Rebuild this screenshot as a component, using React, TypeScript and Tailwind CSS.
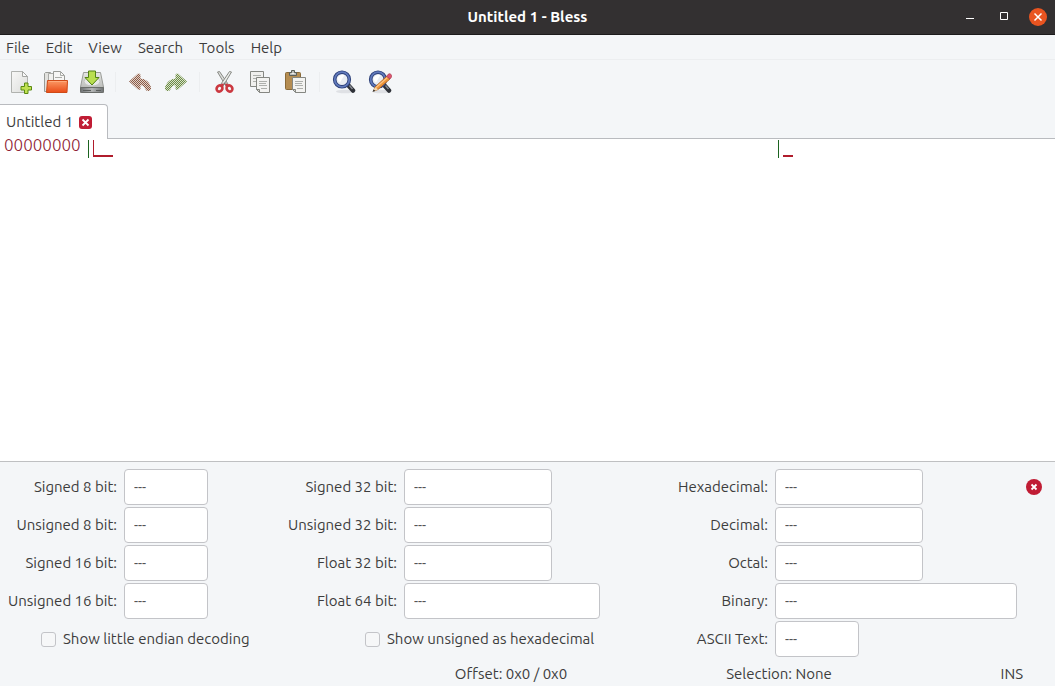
import { useState } from "react";
import type { ReactNode } from "react";

const menus = ["File", "Edit", "View", "Search", "Tools", "Help"];

function Svg({ children }: { children: ReactNode }) {
  return (
    <svg viewBox="0 0 24 24" className="size-6" aria-hidden="true">
      {children}
    </svg>
  );
}

function NewIcon() {
  return (
    <Svg>
      <path d="M3.500 1.500h11l5 5v16h-16z" fill="url(#paper)" stroke="#b0b2af" />
      <path d="M14.500 1.500v5h5z" fill="#fafafa" stroke="#a3a5a2" strokeLinejoin="round" />
      <path d="M16.500 13h3.500v3.500h3.500v3.500h-3.500v3.500h-3.500v-3.500h-3.500v-3.500h3.500z" fill="#c0e052" stroke="#5a8a12" strokeLinejoin="round" />
    </Svg>
  );
}

function OpenIcon() {
  return (
    <Svg>
      <path d="M.500 21.500V3.500l1-1h5l1.500 2v17z" fill="#e2e2df" stroke="#999b97" />
      <path d="M4.500 21V3.500h7V21z" fill="#f1f1ef" stroke="#a9aaa7" />
      <path d="M9.500 18V1.500h7l4 4V18z" fill="#f6f6f5" stroke="#999b97" />
      <path d="M16.500 1.500v4h4M11 7.500h7" fill="none" stroke="#aaaca8" />
      <path d="M3.500 10.500h20l-.5 12H2.500z" fill="url(#folder)" stroke="#cf4a16" strokeLinejoin="round" />
      <path d="M4.500 11.500h18" stroke="#ffab7c" />
    </Svg>
  );
}

function SaveIcon() {
  return (
    <Svg>
      <path d="M3.500 2.500h17l3 14.500v5.500H.5V17z" fill="url(#metal)" stroke="#9a9c98" strokeLinejoin="round" />
      <path d="M.5 17.500h23v4q0 1-1 1h-21q-1 0-1-1z" fill="url(#drive)" stroke="#6a6d6a" />
      <path d="M3 20.500h8M16 20.500h5" stroke="#5c5f5d" />
      <ellipse cx="12" cy="11.500" rx="8" ry="4.500" fill="#e8e9e7" stroke="#c2c4c0" />
      <path d="M8.500 1h7v6.500h3.500L12 15 5 7.500h3.500z" fill="#b9de50" stroke="#528214" strokeLinejoin="round" />
    </Svg>
  );
}

function ArrowIcon({ redo }: { redo?: boolean }) {
  return (
    <Svg>
      <g transform={redo ? "translate(24 0) scale(-1 1)" : undefined}>
        <path
          d="M1 11.500 10 3.500q2.500-.5 2.500 1.500v3.500q8 .5 10.500 8.500.500 4-3 4-2 0-3-2.500-1-3-4.500-3.500v3.500q0 2-2.500 1z"
          fill={redo ? "url(#checkGreen)" : "url(#checkRed)"}
        />
      </g>
    </Svg>
  );
}

function CutIcon() {
  return (
    <Svg>
      <path d="M5.500 2 14.500 17l1.500-3L7.500 1.500z" fill="#dcdedb" stroke="#888a85" strokeLinejoin="round" />
      <path d="M19.500 2 10.500 17 9 14l8.500-12.500z" fill="#eceeeb" stroke="#888a85" strokeLinejoin="round" />
      <ellipse cx="7.500" cy="18.500" rx="2.800" ry="3.200" transform="rotate(35 7.500 18.500)" fill="none" stroke="#cb3840" strokeWidth="2.600" />
      <ellipse cx="17.500" cy="18.500" rx="2.800" ry="3.200" transform="rotate(-35 17.500 18.500)" fill="none" stroke="#cb3840" strokeWidth="2.600" />
      <path d="m9 16 2.500-2M16 16l-2.500-2" stroke="#cb3840" strokeWidth="2" />
      <circle cx="12.500" cy="13.500" r="1" fill="#777" />
    </Svg>
  );
}

function CopyIcon() {
  return (
    <Svg>
      <path d="M2.500 1.500h13v15h-13z" fill="#f0f0ee" stroke="#858782" />
      <path d="M5 5.500h8M5 8.500h8M5 11.500h3" stroke="#aeb0ac" />
      <path d="M8.500 7.500h13v15h-10l-3-3z" fill="#f3f3f1" stroke="#858782" />
      <path d="M8.500 19.500h3v3z" fill="#d5d6d2" stroke="#858782" strokeLinejoin="round" />
      <path d="M11 11.500h8M11 13.500h7M11 15.500h8M13 18.500h6" stroke="#aeb0ac" />
    </Svg>
  );
}

function PasteIcon() {
  return (
    <Svg>
      <rect x="1.500" y="2.500" width="15" height="17" rx="1" fill="#b58d52" stroke="#8a6a38" />
      <path d="M5.500 2.500h2v-2h3v2h2v3h-7z" fill="#b9bbb7" stroke="#5b5e59" />
      <path d="M7.500 3.500h3" stroke="#eee" />
      <path d="M8.500 7.500h13v15h-10l-3-3z" fill="#f3f3f1" stroke="#858782" />
      <path d="M8.500 19.500h3v3z" fill="#d5d6d2" stroke="#858782" strokeLinejoin="round" />
      <path d="M11 11.500h8M11 13.500h7M11 15.500h8M13 18.500h6" stroke="#aeb0ac" />
    </Svg>
  );
}

function FindIcon({ replace }: { replace?: boolean }) {
  return (
    <Svg>
      <ellipse cx="13" cy="21.500" rx="9" ry="1.800" fill="#dfe1e5" />
      <path d="m16.500 15.500 4.500 5" stroke="#2e3138" strokeWidth="4.500" strokeLinecap="round" />
      <path d="m17.500 15.500 3 3.500" stroke="#878b94" strokeWidth="1.500" />
      <circle cx="10" cy="9.500" r="7.300" fill="#e9edf3" stroke="#2c3f78" strokeWidth="3.600" />
      <circle cx="10" cy="9.500" r="7.300" fill="none" stroke="#6079bb" strokeWidth="1.800" />
      <path d="M5.500 8.500c1-3 4.500-4.500 7-3.500L8 12.500c-1.500-.8-2.500-2.500-2.500-4z" fill="#fff" />
      {replace && (
        <>
          <path d="M5.500 21 7 17 19 6l3 3L10 19.500z" fill="#ee9539" stroke="#a85a18" strokeWidth=".8" />
          <path d="M8 17.500 20 7" stroke="#ffc483" strokeWidth="1.200" />
          <path d="m18.500 6.500 2-2.500c1.500-1 4 1 3 3L22 9z" fill="#dc5570" stroke="#a7384c" strokeWidth=".7" />
          <path d="m7 17 3 2.500-5 2z" fill="#f4dab2" />
          <path d="m5.800 19.500 1.500 1.400-2.800.8z" fill="#222" />
        </>
      )}
    </Svg>
  );
}

const toolGroups: { name: string; icon: ReactNode }[][] = [
  [
    { name: "New", icon: <NewIcon /> },
    { name: "Open", icon: <OpenIcon /> },
    { name: "Save", icon: <SaveIcon /> },
  ],
  [
    { name: "Undo", icon: <ArrowIcon /> },
    { name: "Redo", icon: <ArrowIcon redo /> },
  ],
  [
    { name: "Cut", icon: <CutIcon /> },
    { name: "Copy", icon: <CopyIcon /> },
    { name: "Paste", icon: <PasteIcon /> },
  ],
  [
    { name: "Find", icon: <FindIcon /> },
    { name: "Find and Replace", icon: <FindIcon replace /> },
  ],
];

function SharedPaints() {
  return (
    <svg className="absolute size-0" aria-hidden="true">
      <defs>
        <linearGradient id="paper" x2="1" y2="1">
          <stop stopColor="#f8f8f7" />
          <stop offset="1" stopColor="#dcdddb" />
        </linearGradient>
        <linearGradient id="folder" x2="0" y2="1">
          <stop stopColor="#fb9a66" />
          <stop offset="1" stopColor="#ea4c17" />
        </linearGradient>
        <linearGradient id="metal" x2="0" y2="1">
          <stop stopColor="#e6e7e5" />
          <stop offset="1" stopColor="#aeb0ad" />
        </linearGradient>
        <linearGradient id="drive">
          <stop stopColor="#6f7274" />
          <stop offset=".5" stopColor="#b4b6b6" />
          <stop offset="1" stopColor="#6f7274" />
        </linearGradient>
        <pattern id="checkRed" width="2" height="2" patternUnits="userSpaceOnUse">
          <path d="M0 0h2v2H0z" fill="#e2d2c8" />
          <path d="M0 0h1v1H0zM1 1h1v1H1z" fill="#8a5a48" />
        </pattern>
        <pattern id="checkGreen" width="2" height="2" patternUnits="userSpaceOnUse">
          <path d="M0 0h2v2H0z" fill="#d8e4c8" />
          <path d="M0 0h1v1H0zM1 1h1v1H1z" fill="#6b8847" />
        </pattern>
      </defs>
    </svg>
  );
}

function Field({ label, width }: { label: string; width: string }) {
  const id = label.toLowerCase().replace(/\W+/g, "-");
  return (
    <div className="flex items-center gap-[7px]">
      <label htmlFor={id} className="w-[117px] shrink-0 text-right whitespace-nowrap">
        {label}:
      </label>
      <input
        id={id}
        type="text"
        defaultValue="---"
        className={`h-9 rounded-[4px] border border-[#c3c4c8] bg-white px-[9px] text-[14px] text-[#555] outline-none ${width}`}
      />
    </div>
  );
}

function Check({ label, indent }: { label: string; indent: string }) {
  return (
    <label className={`flex h-9 items-center gap-[7px] whitespace-nowrap ${indent}`}>
      <input
        type="checkbox"
        className="size-[15px] shrink-0 appearance-none rounded-[3px] border border-[#c3c4c8] bg-[#f6f7f8] checked:bg-[#e95420]"
      />
      {label}
    </label>
  );
}

export default function App() {
  const [panelOpen, setPanelOpen] = useState(true);

  return (
    <div className="flex h-screen flex-col overflow-hidden bg-[#f4f6f8] font-['Ubuntu','Noto_Sans',sans-serif] text-[15px] leading-5 text-[#3d3d3d]">
      <SharedPaints />
      <header className="grid h-[35px] shrink-0 grid-cols-[1fr_auto_1fr] items-center border-b border-[#1d1b1c] bg-[#333031] text-white">
        <h1 className="col-start-2 font-bold">Untitled 1 - Bless</h1>
        <div className="flex items-center justify-end gap-4 pr-2">
          <button aria-label="Minimize" className="flex size-[18px] items-center justify-center">
            <svg viewBox="0 0 18 18" className="size-[18px]"><path d="M5 10.500h8" stroke="#fff" /></svg>
          </button>
          <button aria-label="Maximize" className="flex size-[18px] items-center justify-center">
            <svg viewBox="0 0 18 18" className="size-[18px]"><path d="M5.500 4.500h7v7h-7z" fill="none" stroke="#fff" /></svg>
          </button>
          <button aria-label="Close" className="size-[18px] rounded-full bg-[#e95420]">
            <svg viewBox="0 0 18 18" className="size-[18px]"><path d="m5.500 5.500 7 7m0-7-7 7" stroke="#fff" strokeWidth="1.500" /></svg>
          </button>
        </div>
      </header>

      <nav className="flex h-[25px] shrink-0 items-center gap-4 border-b border-[#eceef0] px-1.5 pt-0.5">
        {menus.map((m) => (
          <button key={m}>{m}</button>
        ))}
      </nav>

      <div role="toolbar" className="flex h-11 shrink-0 items-center pl-2">
        {toolGroups.map((group, i) => (
          <div key={group[0].name} className="flex items-center">
            {i > 0 && <span className="mr-3 ml-[11px] h-5 w-px bg-[#eceef0]" />}
            <div className="flex gap-3">
              {group.map((t) => (
                <button key={t.name} aria-label={t.name} className="size-6">
                  {t.icon}
                </button>
              ))}
            </div>
          </div>
        ))}
      </div>

      <div className="flex h-[35px] shrink-0 items-stretch">
        <div className="flex items-center gap-1.5 rounded-tr-[4px] border-t border-r border-[#b9bbbf] bg-white pr-[15px] pl-1.5">
          <span>Untitled 1</span>
          <button aria-label="Close tab" className="size-[13px] rounded-[3px] bg-[#c01c34]">
            <svg viewBox="0 0 13 13" className="size-[13px]"><path d="m3.500 3.500 6 6m0-6-6 6" stroke="#fff" strokeWidth="1.800" /></svg>
          </button>
        </div>
        <div className="flex-1 border-b border-[#b9bbbf]" />
      </div>

      <main className="min-h-0 flex-1 bg-white pt-px">
        <div className="flex h-[18px] items-start">
          <span className="w-[88px] shrink-0 pl-1 text-[17px] leading-[10px] font-light text-[#8f2233]">
            00000000
          </span>
          <span className="h-[18px] w-px shrink-0 bg-[#1c6420]" />
          <div className="flex h-[18px] w-[689px] shrink-0 pl-1">
            <span className="h-[17px] w-5 border-b-2 border-l border-[#b01c2c]" />
          </div>
          <span className="h-[18px] w-px shrink-0 bg-[#1c6420]" />
          <span className="ml-1 h-[17px] w-2.5 border-b-2 border-[#b01c2c]" />
        </div>
      </main>

      {panelOpen && (
        <section aria-label="Conversion table" className="grid shrink-0 grid-cols-[280fr_371fr_404fr] border-t border-[#bfc0c2] pt-[7px]">
          <div className="flex flex-col gap-0.5">
            <Field label="Signed 8 bit" width="w-[84px]" />
            <Field label="Unsigned 8 bit" width="w-[84px]" />
            <Field label="Signed 16 bit" width="w-[84px]" />
            <Field label="Unsigned 16 bit" width="w-[84px]" />
            <Check label="Show little endian decoding" indent="pl-[41px]" />
          </div>
          <div className="flex flex-col gap-0.5">
            <Field label="Signed 32 bit" width="w-[148px]" />
            <Field label="Unsigned 32 bit" width="w-[148px]" />
            <Field label="Float 32 bit" width="w-[148px]" />
            <Field label="Float 64 bit" width="w-[196px]" />
            <Check label="Show unsigned as hexadecimal" indent="pl-[85px]" />
          </div>
          <div className="flex items-start justify-between pr-[13px]">
            <div className="flex flex-col gap-0.5">
              <Field label="Hexadecimal" width="w-[148px]" />
              <Field label="Decimal" width="w-[148px]" />
              <Field label="Octal" width="w-[148px]" />
              <Field label="Binary" width="w-[242px]" />
              <Field label="ASCII Text" width="w-[84px]" />
            </div>
            <div className="flex h-9 items-center">
              <button aria-label="Close panel" onClick={() => setPanelOpen(false)} className="size-4 rounded-full bg-[#c01c34]">
                <svg viewBox="0 0 16 16" className="size-4"><path d="m5.500 5.500 5 5m0-5-5 5" stroke="#fff" strokeWidth="1.800" /></svg>
              </button>
            </div>
          </div>
        </section>
      )}

      <footer className="grid h-[29px] shrink-0 grid-cols-[377fr_268fr_268fr_142fr] items-center pt-1 text-center">
        <span className="col-start-2">Offset: 0x0 / 0x0</span>
        <span>Selection: None</span>
        <span className="pr-8 text-right">INS</span>
      </footer>
    </div>
  );
}
